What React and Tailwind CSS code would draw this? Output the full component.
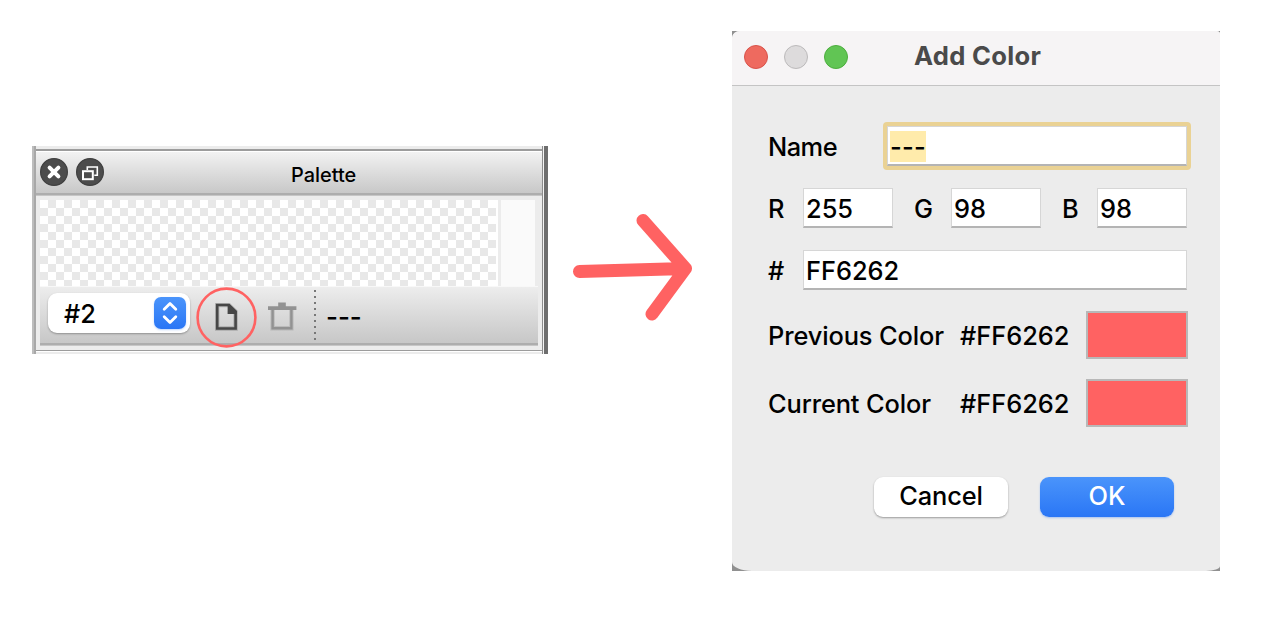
function PaletteHeader() {
  return (
    <div className="flex h-[44px] flex-col">
      <div className="flex h-[41px] w-full items-start bg-linear-to-b from-[#f2f2f2] to-[#c8c8c8] pt-[6px] pl-1">
        <svg className="h-7 w-7" viewBox="0 0 28 28">
          <circle cx="14" cy="14" r="13.4" fill="#4c4c4c" stroke="#404040" strokeWidth="1.2" />
          <path d="M9.6 9.6 18.4 18.4M18.4 9.6 9.6 18.4" stroke="#fff" strokeWidth="4" strokeLinecap="round" />
        </svg>
        <svg className="ml-2 h-7 w-7" viewBox="0 0 28 28">
          <circle cx="14" cy="14" r="13.4" fill="#4c4c4c" stroke="#404040" strokeWidth="1.2" />
          <path d="M11.3 12V9h10v8.3h-3" fill="none" stroke="#fff" strokeWidth="1.6" />
          <rect x="7" y="13.2" width="9.8" height="8" fill="#4c4c4c" stroke="#fff" strokeWidth="2" />
        </svg>
        <span className="mt-[5px] ml-[187px] text-[19.9px] leading-6 font-medium text-black">Palette</span>
      </div>
      <div className="h-0.5 w-full bg-[#adadad]" />
      <div className="h-px w-full bg-[#c6c6c6]" />
    </div>
  );
}

function Stepper() {
  return (
    <div className="flex h-8 w-8 items-center justify-center rounded-[7px] bg-linear-to-b from-[#4a94fb] to-[#2a76f5] shadow-[0_1px_2px_rgba(42,118,245,0.3)]">
      <svg className="h-8 w-8" viewBox="0 0 32 32" fill="none" stroke="#fff" strokeWidth="2.8" strokeLinecap="round" strokeLinejoin="round">
        <path d="M10.2 12.2 16 6.4 21.8 12.2M10.2 19.8 16 25.6 21.8 19.8" />
      </svg>
    </div>
  );
}

function PaletteToolbar() {
  return (
    <div className="flex h-[60px] w-[498px] flex-col border-t border-[#f8f8f8]">
      <div className="flex h-[56px] bg-linear-to-b from-[#ededed] to-[#c7c7c7]">
        <div className="mt-1.5 ml-2 flex h-10 w-[142px] items-center justify-between rounded-[9px] bg-white pr-1 pl-4 shadow-[0_1px_2px_rgba(0,0,0,0.3)]">
          <span className="pt-0.5 text-[25.4px] font-medium text-black">#2</span>
          <Stepper />
        </div>
        <div className="relative ml-[22px] h-[56px] w-7">
          <svg className="mt-4 ml-[3px] h-8 w-7" viewBox="0 0 28 32">
            <path d="M2.2 2h11.6L20.6 8.6V25.5H2.2z" fill="none" stroke="#555" strokeOpacity="0.3" strokeWidth="4.4" />
            <path d="M2.2 2h11.6L20.6 8.6V25.5H2.2z" fill="none" stroke="#474747" strokeWidth="2.6" />
            <path d="M12.6 1h1.8l7.2 7v3h-9z" fill="#474747" />
          </svg>
          <svg className="absolute top-0 -left-4 h-[62px] w-[62px]" viewBox="0 0 62 62">
            <circle cx="30.5" cy="30.5" r="28.9" fill="none" stroke="#ff6262" strokeWidth="2.6" />
          </svg>
        </div>
        <svg className="mt-3.5 ml-7 h-8 w-8" viewBox="0 0 32 32">
          <path d="M4.6 8V27.3H23.4V8" fill="none" stroke="#999" strokeOpacity="0.4" strokeWidth="4.4" />
          <path d="M4.6 8V27.3H23.4V8" fill="none" stroke="#929292" strokeWidth="2.4" />
          <path d="M0 5.2H10.2V1.4H17.8V5.2H28.4V9H0z" fill="#929292" />
        </svg>
        <svg className="mt-0.5 ml-[13px] h-[54px] w-1" viewBox="0 0 4 54">
          <path d="M2 1v52" stroke="#777" strokeWidth="2" strokeDasharray="2 4" />
        </svg>
        <span className="mt-[11px] ml-[9px] text-[25.8px] font-medium text-black">---</span>
      </div>
      <div className="h-0.5 w-full bg-[#adadad]" />
      <div className="h-px w-full bg-[#c6c6c6]" />
    </div>
  );
}

function Palette() {
  return (
    <section className="mt-[146px] ml-8 flex h-[208px] w-[516px] shrink-0 bg-[#ececec]">
      <div className="w-0.5 bg-[#bdbdbd]" />
      <div className="w-0.5 bg-[#a8a8a8]" />
      <div className="w-[506px]">
        <div className="h-[3px]" />
        <div className="h-0.5 bg-[#9c9c9c]" />
        <div className="h-px bg-white" />
        <PaletteHeader />
        <div className="mt-1 ml-1 flex h-[86px]">
          <div className="w-[456px] bg-[conic-gradient(#e8e8e8_25%,#fff_0_50%,#e8e8e8_0_75%,#fff_0)] bg-size-[16px_16px]" />
          <div className="w-0.5 bg-white" />
          <div className="ml-[3px] w-[34px] bg-[#fafafa]" />
        </div>
        <div className="ml-1">
          <PaletteToolbar />
        </div>
        <div className="mt-[4px] h-px bg-[#9c9c9c]" />
        <div className="h-px bg-white" />
      </div>
      <div className="w-px bg-[#8c8c8c]" />
      <div className="w-px bg-[#f4f4f4]" />
      <div className="w-1 bg-[#6e6e6e]" />
    </section>
  );
}

function Arrow() {
  return (
    <svg className="mt-[205px] ml-[17px] h-[125px] w-[135px] shrink-0" viewBox="0 0 135 125" fill="none" stroke="#ff6262" strokeWidth="13" strokeLinecap="round" strokeLinejoin="round">
      <path d="M14.5 66.5 120.5 63.5M78 15.5 120.5 63.5M120.5 63.5 87 109" />
    </svg>
  );
}

function Field({ value, className }) {
  return (
    <div className={"flex h-10 items-center border border-b-2 border-[#d6d6d6] border-b-[#b4b4b4] bg-white pt-0.5 pl-0.5 " + className}>
      <span>{value}</span>
    </div>
  );
}

function ColorRow({ label }) {
  return (
    <div className="flex h-12 items-center">
      <span className="w-[192px] pt-0.5 tracking-[-0.12px]">{label}</span>
      <span className="w-[126px] pt-0.5">#FF6262</span>
      <div className="h-12 w-[102px] border-2 border-[#b8b8b8] bg-[#ff6262]" />
    </div>
  );
}

function Dialog() {
  return (
    <section className="mt-[31px] ml-8 h-[540px] w-[488px] shrink-0 bg-[#909090]">
      <div className="flex h-full flex-col overflow-hidden rounded-[8px_4px_14px_20px/7px_3px_5px_9px] bg-[#ececec]">
        <header className="flex h-[55px] items-start border-b border-[#c4c4c4] bg-[#f6f4f5] pl-3">
          <div className="mt-[14px] flex gap-4">
            <div className="h-6 w-6 rounded-full border border-[#d8524a] bg-[#ee6a5f]" />
            <div className="h-6 w-6 rounded-full border border-[#bcbabb] bg-[#dddbdc]" />
            <div className="h-6 w-6 rounded-full border border-[#4cae3d] bg-[#61c554]" />
          </div>
          <h1 className="mt-[9px] ml-[66px] text-[25.6px] leading-8 font-bold tracking-[0.3px] text-[#4a4a4a]">Add Color</h1>
        </header>
        <div className="pl-9 text-[25.4px] leading-8 font-[450] text-black">
          <div className="mt-9 flex h-12 items-center">
            <span className="w-[115px] pt-0.5 tracking-[-0.5px]">Name</span>
            <div className="h-12 w-[308px] rounded-[4px] bg-[#ead294] p-1">
              <div className="flex h-10 items-center border border-b-2 border-[#d6d6d6] border-b-[#b4b4b4] bg-white pt-0.5 pl-0.5">
                <span className="w-9 bg-[#ffebab] leading-[31px] tracking-[0.2px]">---</span>
              </div>
            </div>
          </div>
          <div className="mt-[18px] flex h-10 items-center">
            <span className="w-[35px] pt-0.5">R</span>
            <Field value="255" className="w-[90px]" />
            <span className="ml-[21px] w-[37px] pt-0.5">G</span>
            <Field value="98" className="w-[90px]" />
            <span className="ml-[21px] w-[35px] pt-0.5">B</span>
            <Field value="98" className="w-[90px]" />
          </div>
          <div className="mt-[22px] flex h-10 items-center">
            <span className="w-[35px] pt-0.5">#</span>
            <Field value="FF6262" className="w-[384px]" />
          </div>
          <div className="mt-[21px] flex flex-col gap-5">
            <ColorRow label="Previous Color" />
            <ColorRow label="Current Color" />
          </div>
          <div className="mt-[50px] ml-[106px] flex gap-8">
            <button className="h-10 w-[134px] rounded-[9px] bg-white pb-0.5 tracking-[-0.15px] shadow-[0_1px_2px_rgba(0,0,0,0.35)]">Cancel</button>
            <button className="h-10 w-[134px] rounded-[9px] bg-linear-to-b from-[#4a94fb] to-[#2a76f5] pb-0.5 text-white shadow-[0_1px_2px_rgba(42,118,245,0.35)]">OK</button>
          </div>
        </div>
      </div>
    </section>
  );
}

export default function App() {
  return (
    <main className="flex h-[624px] w-[1278px] items-start overflow-hidden bg-white font-['Inter','Liberation_Sans',sans-serif]">
      <Palette />
      <Arrow />
      <Dialog />
    </main>
  );
}
